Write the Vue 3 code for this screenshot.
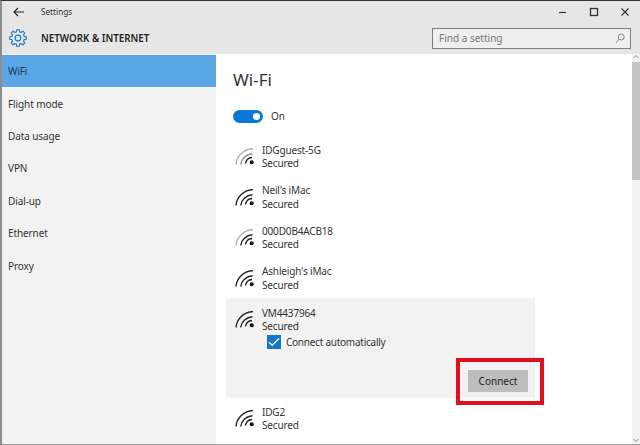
<script setup>
const navItems = ['WiFi', 'Flight mode', 'Data usage', 'VPN', 'Dial-up', 'Ethernet', 'Proxy']

const DARK = '#222'
const GREY = '#b0b0b0'

const networksBefore = [
  { name: 'IDGguest-5G', outer: GREY, middle: '#8c8c8c' },
  { name: "Neil's iMac", outer: DARK, middle: DARK },
  { name: '000D0B4ACB18', outer: GREY, middle: DARK },
  { name: "Ashleigh's iMac", outer: DARK, middle: DARK }
]

const arcs = {
  outer: 'M4 16.5C4.5 8 12 1 21 .6',
  middle: 'M8.7 16.5C9.2 11 14 6.3 20.5 5.8',
  inner: 'M13.5 15.5C14 12 16.5 9.8 20 9.5'
}

const gearPath = (() => {
  const cx = 12, cy = 12, teeth = 8
  const points = []
  for (let i = 0; i < teeth; i++) {
    const a = (i / teeth) * Math.PI * 2 - Math.PI / 2
    const step = (Math.PI * 2) / teeth
    const list = [
      [a - step * 0.34, 8.4],
      [a - step * 0.2, 11.2],
      [a + step * 0.2, 11.2],
      [a + step * 0.34, 8.4]
    ]
    for (const [t, r] of list) {
      points.push((cx + Math.cos(t) * r).toFixed(2) + ' ' + (cy + Math.sin(t) * r).toFixed(2))
    }
  }
  return 'M' + points.join('L') + 'Z'
})()
</script>

<template>
  <div class="window">
    <header class="chrome">
      <div class="titlebar">
        <svg class="back" width="11" height="10" viewBox="0 0 11 10">
          <path d="M11 5H1M5 1L1 5l4 4" fill="none" stroke="#222" stroke-width="1.1" />
        </svg>
        <span class="app-name">Settings</span>
        <div class="controls">
          <svg width="10" height="10" viewBox="0 0 10 10"><path d="M1 5.5h7" stroke="#333" stroke-width="1.2" /></svg>
          <svg width="10" height="10" viewBox="0 0 10 10"><rect x="1.5" y="1.5" width="7" height="7" fill="none" stroke="#333" stroke-width="1.3" /></svg>
          <svg width="10" height="10" viewBox="0 0 10 10"><path d="M1.5 1.5l7 7M8.5 1.5l-7 7" stroke="#333" stroke-width="1.1" /></svg>
        </div>
      </div>
      <div class="headbar">
        <svg class="gear" width="18" height="18" viewBox="0 0 24 24">
          <path :d="gearPath" fill="none" stroke="#1f78c8" stroke-width="1.5" stroke-linejoin="round" />
          <circle cx="12" cy="12" r="3.8" fill="none" stroke="#1f78c8" stroke-width="1.5" />
        </svg>
        <span class="section">NETWORK &amp; INTERNET</span>
        <div class="search">
          <span>Find a setting</span>
          <svg width="10" height="11" viewBox="0 0 10 11">
            <circle cx="6.2" cy="4" r="3" fill="none" stroke="#8a8a8a" stroke-width="1" />
            <path d="M4 6.3L1 10" stroke="#8a8a8a" stroke-width="1" />
          </svg>
        </div>
      </div>
    </header>

    <div class="body">
      <nav class="sidebar">
        <div v-for="(item, i) in navItems" :key="item" class="nav-item" :class="{ active: i === 0 }">{{ item }}</div>
      </nav>

      <main class="content">
        <h1>Wi-Fi</h1>
        <div class="toggle-row">
          <span class="toggle"><span class="knob"></span></span>
          <span>On</span>
        </div>

        <div class="list">
          <div v-for="n in networksBefore" :key="n.name" class="net">
            <svg class="wifi" width="22" height="20" viewBox="0 0 22 20">
              <path :d="arcs.outer" fill="none" :stroke="n.outer" stroke-width="1.4" />
              <path :d="arcs.middle" fill="none" :stroke="n.middle" stroke-width="1.4" />
              <path :d="arcs.inner" fill="none" stroke="#222" stroke-width="1.4" />
              <circle cx="19.7" cy="14.2" r="2" fill="#111" />
            </svg>
            <div class="net-text">
              <div>{{ n.name }}</div>
              <div>Secured</div>
            </div>
          </div>

          <div class="selected">
            <div class="net inner">
              <svg class="wifi" width="22" height="20" viewBox="0 0 22 20">
                <path :d="arcs.outer" fill="none" stroke="#222" stroke-width="1.4" />
                <path :d="arcs.middle" fill="none" stroke="#222" stroke-width="1.4" />
                <path :d="arcs.inner" fill="none" stroke="#222" stroke-width="1.4" />
                <circle cx="19.7" cy="14.2" r="2" fill="#111" />
              </svg>
              <div class="net-text">
                <div>VM4437964</div>
                <div>Secured</div>
              </div>
            </div>
            <label class="auto">
              <span class="check">
                <svg width="14" height="14" viewBox="0 0 14 14"><path d="M2 7.2l3.2 3.2L12 3.4" fill="none" stroke="#fff" stroke-width="1.3" /></svg>
              </span>
              <span>Connect automatically</span>
            </label>
            <div class="actions">
              <button class="connect">Connect</button>
            </div>
          </div>

          <div class="net">
            <svg class="wifi" width="22" height="20" viewBox="0 0 22 20">
              <path :d="arcs.outer" fill="none" stroke="#222" stroke-width="1.4" />
              <path :d="arcs.middle" fill="none" stroke="#222" stroke-width="1.4" />
              <path :d="arcs.inner" fill="none" stroke="#222" stroke-width="1.4" />
              <circle cx="19.7" cy="14.2" r="2" fill="#111" />
            </svg>
            <div class="net-text">
              <div>IDG2</div>
              <div>Secured</div>
            </div>
          </div>
        </div>

        <div class="highlight"></div>

        <div class="scrollbar">
          <svg width="8" height="6" viewBox="0 0 8 6"><path d="M1.5 4L4 1.5 6.5 4" fill="none" stroke="#888" /></svg>
          <div class="thumb"></div>
          <svg class="down" width="8" height="6" viewBox="0 0 8 6"><path d="M1.5 2L4 4.5 6.5 2" fill="none" stroke="#888" /></svg>
        </div>
      </main>
    </div>
  </div>
</template>

<style>
html, body { margin: 0; background: #fff; }
</style>

<style scoped>
.window {
  width: 640px;
  height: 445px;
  box-sizing: border-box;
  display: flex;
  flex-direction: column;
  overflow: hidden;
  border-top: 1px solid #333;
  border-left: 2px solid #8d8d8d;
  border-bottom: 1px solid #9c9c9c;
  font-family: "Noto Sans", "Open Sans", sans-serif;
  font-size: 10px;
  color: #333;
  background: #fff;
}
.chrome { background: #e6e6e6; height: 53px; flex: none; }
.titlebar { height: 21px; display: flex; align-items: center; padding-left: 11px; }
.back { flex: none; }
.app-name { margin-left: 17px; font-size: 8.2px; color: #333; }
.controls { margin-left: auto; display: flex; gap: 21px; padding-right: 10px; }
.headbar { height: 32px; display: flex; align-items: center; padding-left: 7px; }
.gear { flex: none; }
.section { margin-left: 14px; font-size: 9.8px; font-weight: 600; color: #222; }
.search {
  margin-left: auto;
  margin-right: 9px;
  width: 199px;
  height: 21px;
  box-sizing: border-box;
  border: 1.5px solid #7f7f7f;
  background: #efefef;
  display: flex;
  align-items: center;
  justify-content: space-between;
  padding: 0 5px 0 6px;
  font-size: 10px;
  color: #777;
}
.body { flex: 1; display: flex; min-height: 0; }
.sidebar { width: 214px; flex: none; background: #f2f2f2; padding-top: 1px; }
.nav-item { height: 32.4px; display: flex; align-items: center; padding-left: 6px; font-size: 10px; letter-spacing: -0.1px; color: #333; }
.nav-item.active { background: #5ba6e4; color: #1c3550; }
.content { position: relative; flex: 1; background: #fff; padding-left: 10px; min-width: 0; }
h1 { margin: 15px 0 0 7px; font-size: 17px; line-height: 22px; font-weight: 400; color: #333; }
.toggle-row { display: flex; align-items: center; gap: 8px; margin: 17px 0 0 7px; height: 16px; font-size: 10px; }
.toggle { width: 30px; height: 13px; border-radius: 7px; background: #0b78d6; display: flex; align-items: center; justify-content: flex-end; padding-right: 3px; box-sizing: border-box; }
.knob { width: 7px; height: 7px; border-radius: 50%; background: #fff; }
.list { margin-top: 12px; }
.net { height: 40.5px; display: flex; align-items: center; padding-left: 6px; box-sizing: border-box; padding-top: 2px; }
.wifi { flex: none; margin-top: 2px; }
.net-text { margin-left: 8px; line-height: 13.4px; font-size: 10px; letter-spacing: -0.16px; }
.selected { height: 100px; width: 309px; background: #f2f2f2; position: relative; }
.inner { height: 40px; padding-top: 4px; }
.auto { display: flex; align-items: center; gap: 5px; margin: -3px 0 0 41px; font-size: 10px; letter-spacing: -0.25px; }
.check { width: 14px; height: 14px; background: #1476c9; display: block; }
.check svg { display: block; }
.actions { display: flex; justify-content: flex-end; margin-top: 21px; padding-right: 7px; }
.connect {
  width: 60px;
  height: 22px;
  border: 0;
  padding: 0;
  background: #bdbdbd;
  font-family: inherit;
  font-size: 10px;
  color: #222;
}
.highlight {
  position: absolute;
  left: 240px;
  top: 304px;
  width: 88px;
  height: 47px;
  box-sizing: border-box;
  border: 4px solid #e2101f;
  pointer-events: none;
}
.scrollbar {
  position: absolute;
  top: 0;
  right: 0;
  bottom: 0;
  width: 8px;
  background: #f2f2f2;
  display: flex;
  flex-direction: column;
  align-items: center;
}
.thumb { width: 8px; height: 118px; background: #c4c4c4; margin-top: 2px; }
.down { margin-top: auto; margin-bottom: 1px; }
</style>
